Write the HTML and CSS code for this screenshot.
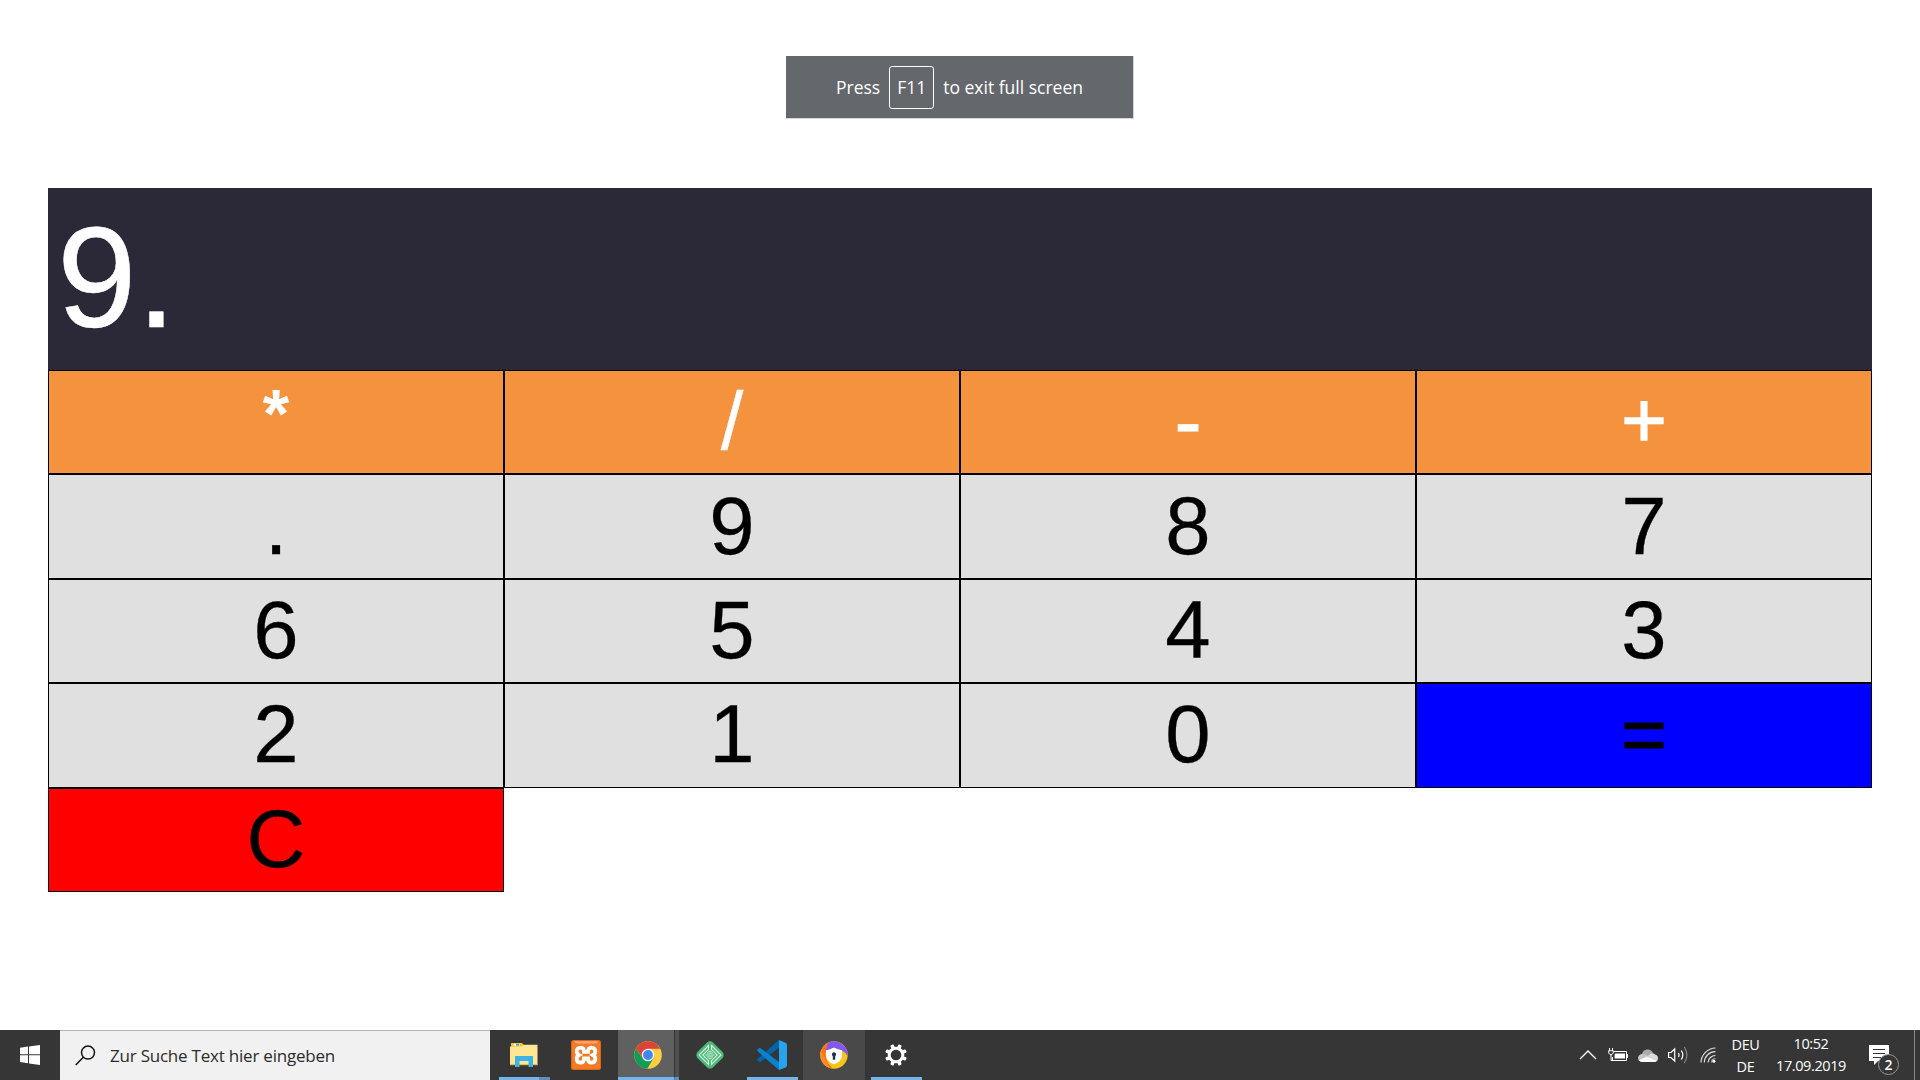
FILE: index.html
```html
<!DOCTYPE html>
<html lang="de">
<head>
<meta charset="utf-8">
<title>Calculator</title>
<link rel="stylesheet" href="styles.css">
</head>
<body>
<div class="fullscreen-hint"><span>Press</span><kbd class="key">F11</kbd><span>to exit full screen</span></div>

<main class="calculator">
  <div class="display">9.</div>
  <div class="keys">
    <button class="operator times">*</button><button class="operator">/</button><button class="operator minus">-</button><button class="operator plus">+</button>
    <button>.</button><button>9</button><button>8</button><button>7</button>
    <button>6</button><button>5</button><button>4</button><button>3</button>
    <button>2</button><button>1</button><button>0</button><button class="equals">=</button>
    <button class="clear">C</button>
  </div>
</main>

<footer class="taskbar">
  <div class="start">
    <svg width="20" height="20" viewBox="0 0 20 20" fill="#fff"><path d="M0 2.8 8 1.6V9.3H0ZM9 1.5 20 0V9.3H9ZM0 10.3H8V18.2L0 17.1ZM9 10.3H20V20L9 18.4Z"/></svg>
  </div>
  <div class="search">
    <svg width="21" height="21" viewBox="0 0 21 21" fill="none" stroke="#111" stroke-width="1.5"><circle cx="13" cy="7.6" r="6.5"/><path d="M8.3 12.3.7 20"/></svg>
    <span>Zur Suche Text hier eingeben</span>
  </div>
  <div class="apps">
    <div class="app running grouped">
      <svg width="28" height="28" viewBox="0 0 28 28"><path d="M1 2h11l2 2v5H1z" fill="#f5bd27"/><path d="M3.5 2.8h6v2h-6z" fill="#fff"/><path d="M6 2.8h3v2H6z" fill="#4db4a4"/><path d="M0 5.5h11.5L14 3.7h13.5V24H0z" fill="#ffe694"/><path d="M0 23h27.5v1.2H0z" fill="#e9bc55"/><path d="M5 15h18v11h-4.5v-6h-9v6H5z" fill="#3cb2e5"/></svg>
    </div>
    <div class="app">
      <svg width="30" height="30" viewBox="0 0 30 30"><rect width="30" height="30" rx="2.5" fill="#d9661b"/><rect x="1" y="1" width="28" height="28" rx="2" fill="#f47a24"/><path d="M3 1.2h24q-1 2.3-4 2.3H7Q4 3.5 3 1.2z" fill="#fba878"/><path d="M9.7 7.6c3 0 3.300 2.200 3.300 4.200h4c0-2 .3-4.200 3.300-4.200 2.500 0 4 1.600 4 3.700 0 2-1 3-2.300 3.700 1.300.7 2.300 1.800 2.300 3.900 0 2.200-1.500 3.700-4 3.700-3 0-3.300-2.200-3.300-4.200h-4c0 2-.3 4.200-3.300 4.200-2.500 0-4-1.500-4-3.700 0-2.100 1-3.200 2.300-3.900-1.300-.7-2.300-1.700-2.300-3.700 0-2.100 1.500-3.700 4-3.700z" fill="none" stroke="#fff" stroke-width="3.8"/></svg>
    </div>
    <div class="app active grouped">
      <svg width="28" height="28" viewBox="0 0 28 28"><circle cx="14" cy="14" r="13.8" fill="#ffcd40"/><path d="M1.900 7.300A13.800 13.800 0 0 0 13.300 27.800L19.500 17.200 14 14 8.500 17.200Z" fill="#0f9d58"/><path d="M1.900 7.300A13.800 13.800 0 0 1 26.200 7.700H14L8.500 17.200Z" fill="#db4437"/><circle cx="14" cy="14" r="6.300" fill="#f1f1f1"/><circle cx="14" cy="14" r="4.900" fill="#4285f4"/></svg>
    </div>
    <div class="app">
      <svg width="30" height="30" viewBox="0 0 30 30"><rect x="4" y="4" width="22" height="22" rx="4.5" transform="rotate(45 15 15)" fill="#4cb978"/><g fill="none" stroke="#d9f3e2" stroke-width="1.100"><path d="M13.500 5.500 4 15l9.500 9.500v-3.800L7.800 15l5.700-5.700zM16.500 5.500 26 15l-9.500 9.500v-3.800l5.700-5.700-5.700-5.700z"/><path d="M13.500 11.300h3M12 13.100h6M10.500 15h9M12 16.900h6M13.500 18.700h3" stroke-width=".9"/></g></svg>
    </div>
    <div class="app running">
      <svg width="30" height="30" viewBox="0 0 30 30"><path d="M22 0v7.500L3.600 22q-.9.700-1.700 0L.5 20.600q-.8-.9 0-1.700Z" fill="#0065a9"/><path d="M1.700 8.300Q2.600 7.500 3.600 8.200L22 22v8L.6 11.300q-.7-.9 0-1.700Z" fill="#0a83ce"/><path d="M22 0 28.500 2.700Q30 3.300 30 5v20q0 1.700-1.500 2.400L22 30z" fill="#26a4ef"/></svg>
    </div>
    <div class="app hovered">
      <svg width="28" height="28" viewBox="0 0 28 28"><circle cx="14" cy="14" r="13.700" fill="#f5c51b"/><path d="M7 2.200A13.700 13.700 0 0 1 27.600 15Q23 7.500 14 7.500 9 7 5 12z" fill="#8257f2"/><path d="M8.500 1.500A13.700 13.700 0 0 0 12.500 27.600L8 22Q2.500 13 8.500 1.500z" fill="#fb7218"/><path d="M1 9.500A13.700 13.700 0 0 0 10 27L6 20z" fill="#ff8a2b"/><path d="M14 6.500q4 2.500 8 2.700v5Q22 20.500 14 23.200 6 20.500 6 14.200v-5Q10 9 14 6.500z" fill="#fff"/><path d="M14 11.200a2.200 2.200 0 0 1 1.200 4v3.600h-2.400v-3.600a2.200 2.200 0 0 1 1.200-4z" fill="#20304d"/></svg>
    </div>
    <div class="app running">
      <svg width="22" height="22" viewBox="0 0 22 22"><g fill="#fff"><rect x="9.200" width="3.600" height="22" rx="1" transform="rotate(22.500 11 11)"/><rect x="9.200" width="3.600" height="22" rx="1" transform="rotate(67.500 11 11)"/><rect x="9.200" width="3.600" height="22" rx="1" transform="rotate(112.500 11 11)"/><rect x="9.200" width="3.600" height="22" rx="1" transform="rotate(157.500 11 11)"/><circle cx="11" cy="11" r="8.300"/></g><circle cx="11" cy="11" r="5.300" fill="#363636"/></svg>
    </div>
  </div>
  <div class="tray">
    <div class="tray-icon"><svg width="18" height="10" viewBox="0 0 18 10" fill="none" stroke="#fff" stroke-width="1.400"><path d="m1 9 8-8 8 8"/></svg></div>
    <div class="tray-icon"><svg width="20" height="14" viewBox="0 0 20 14" fill="none" stroke="#fff"><path d="M6 3.500h12.500v9h-14V9M19.500 6v4M1.500 0v2.500M4.500 0v2.500M.7 2.700h4.600v2.500L3 7 .7 5.200zM3 7v5.500h2"/><path d="M7 5.500h10v5H6.500V8z" fill="#fff" stroke="none"/></svg></div>
    <div class="tray-icon"><svg width="20" height="13" viewBox="0 0 20 13"><path d="M4 5A5.800 5.800 0 0 1 15 4l-4 5-9-3z" fill="#aaa"/><path d="M13 4.500a4.500 4.500 0 0 1 4 1A3.800 3.800 0 0 1 16.500 13L7 9z" fill="#d9d9d9"/><path d="M4.500 5q2-.2 4 1L17 11q0 2-2 2H4Q0 12.500 0 9q.3-3.700 4.500-4z" fill="#c4c4c4"/><path d="m9 7.500 9.500 4.300Q18 13 16 13H4q-2 0-3-2z" fill="#fafafa"/></svg></div>
    <div class="tray-icon"><svg width="20" height="18" viewBox="0 0 20 18" fill="none" stroke="#fff" stroke-width="1.200"><path d="M.6 6.500H3L6.700 3v12L3 11.500H.6zM10.500 7q1.200 2 0 4M13.300 4.500q3 4.500 0 9"/><path d="M16.300 1q5.200 8 0 16" stroke="#888"/></svg></div>
    <div class="tray-icon"><svg width="16" height="16" viewBox="0 0 16 16" fill="none" stroke="#ddd" stroke-width="1.200"><path d="M1 15.500A15 15 0 0 1 15.500 1M4.300 15.500A11 11 0 0 1 15.500 4.700M8 15.500a7.500 7.500 0 0 1 7.500-7"/><path d="M11.500 15.500q0-3.500 4-3.800" stroke="#aaa"/><circle cx="13.900" cy="14.200" r="1.500" fill="#fff" stroke="none"/></svg></div>
    <div class="stack language"><span>DEU</span><span>DE</span></div>
    <div class="stack clock"><span>10:52</span><span>17.09.2019</span></div>
    <div class="notifications">
      <svg width="20" height="20" viewBox="0 0 20 20"><path d="M0 0h20v16H9l-4 4v-4H0z" fill="#fff"/><path d="M4 4.500h12M4 8.500h12M4 12.500h8" stroke="#333" stroke-width="1"/></svg>
      <span class="badge">2</span>
    </div>
  </div>
</footer>
</body>
</html>
```
FILE: styles.css
```css
* { box-sizing: border-box; }
body {
  margin: 0;
  height: 1080px;
  padding-top: 56px;
  display: flex;
  flex-direction: column;
  overflow: hidden;
  background: #fff;
  font-family: "Open Sans", "Noto Sans", sans-serif;
}
svg { display: block; }

.fullscreen-hint {
  align-self: center;
  width: 348px;
  height: 63px;
  display: flex;
  align-items: center;
  justify-content: center;
  gap: 9px;
  color: #fff;
  background: #64676b;
  border: solid #d4d5d6;
  border-width: 0 1px 1px 0;
  font-size: 17.5px;
  white-space: nowrap;
}
.key {
  width: 45px;
  height: 43px;
  display: flex;
  align-items: center;
  justify-content: center;
  border: 1px solid #fff;
  border-radius: 3px;
  font: inherit;
}

.calculator {
  width: 95%;
  margin: 69px auto 0;
  font-family: "Liberation Sans", Arial, sans-serif;
}
.display {
  height: 182px;
  display: flex;
  align-items: center;
  padding: 0 0 3px 9px;
  color: #fff;
  background: #2b2937;
  font-size: 143px;
  -webkit-text-stroke: 0.5px;
}
.keys {
  display: grid;
  grid-template-columns: repeat(4, 1fr);
  grid-auto-rows: 104.4px;
}
.keys button {
  padding: 0 0 2px;
  border: 1px solid #000;
  border-radius: 0;
  color: #000;
  background: #e0e0e0;
  font: 81.5px "Liberation Sans", Arial, sans-serif;
  -webkit-text-stroke: 0.3px;
}
.keys .operator { color: #fff; background: #f5923e; }
.keys .times { padding-bottom: 19px; font-size: 68px; font-weight: bold; -webkit-text-stroke: 0; }
.keys .minus { padding-bottom: 0; -webkit-text-stroke: 0.8px; }
.keys .plus { padding-bottom: 4px; font-size: 78px; -webkit-text-stroke: 1.4px; }
.keys .equals { font-size: 78px; background: #00f; -webkit-text-stroke: 1.2px; }
.keys .clear { background: #f00; }

.taskbar {
  height: 50px;
  margin-top: auto;
  display: flex;
  color: #fff;
  background: #363636;
}
.start {
  width: 60px;
  display: flex;
  align-items: center;
  justify-content: center;
}
.search {
  width: 430px;
  display: flex;
  align-items: center;
  gap: 14px;
  padding-left: 15px;
  color: #2c2c2c;
  background: #f1f1f1;
  border-top: 1px solid #b5b5b5;
  font-size: 17px;
  letter-spacing: -0.22px;
  white-space: nowrap;
}
.apps { display: flex; margin-left: 3px; }
.app {
  position: relative;
  width: 62px;
  display: flex;
  align-items: center;
  justify-content: center;
}
.app.running::after {
  content: "";
  position: absolute;
  inset: auto 5px 0 6px;
  height: 3px;
  background: #76b4ec;
}
.app.running.grouped::after { background: linear-gradient(90deg, #76b4ec 40px, #5f8fba 40px); }
.app.active { background: linear-gradient(90deg, #363636 1px, #606060 1px 57px, #333 57px 58px, #505050 58px); }
.app.active::after {
  content: "";
  position: absolute;
  inset: auto 0 0 1px;
  height: 3px;
  background: linear-gradient(90deg, #76b4ec 56px, #4d7ba5 56px 57px, #5f8fba 57px);
}
.app.hovered { background: #494949; }

.tray { display: flex; margin-left: auto; border-right: 5px solid #363636; }
.tray-icon {
  width: 30px;
  display: flex;
  align-items: center;
  justify-content: center;
}
.stack {
  display: flex;
  flex-direction: column;
  align-items: center;
  padding-top: 3px;
  font-size: 14.5px;
  line-height: 22px;
  letter-spacing: -0.4px;
}
.language { width: 45px; padding-top: 4px; }
.clock { width: 86px; }
.notifications {
  position: relative;
  width: 61px;
  padding: 15px 0 0 15px;
  border-right: 1px solid #888;
}
.badge {
  position: absolute;
  left: 24px;
  top: 24px;
  width: 21px;
  height: 21px;
  display: flex;
  align-items: center;
  justify-content: center;
  border: 1px solid #999;
  border-radius: 50%;
  background: #363636;
  font-size: 14px;
  font-weight: 600;
}
```
